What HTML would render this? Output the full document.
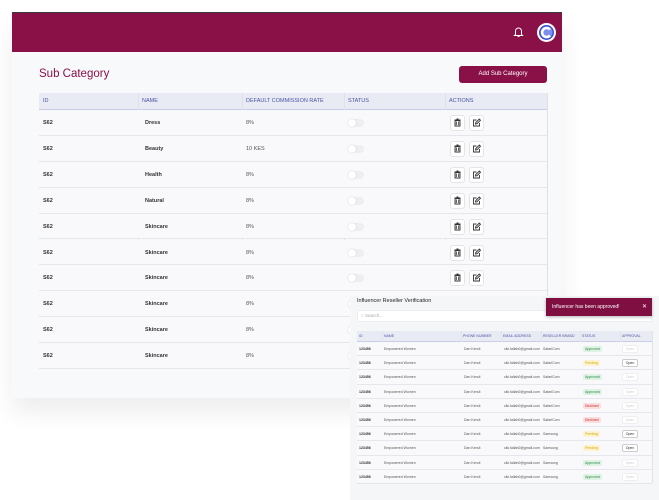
<!DOCTYPE html>
<html><head><meta charset="utf-8"><style>
*{margin:0;padding:0;box-sizing:border-box}
body{width:659px;height:500px;background:#fff;position:relative;overflow:hidden;font-family:"Liberation Sans",sans-serif}
.abs{position:absolute}
#card{left:12px;top:12px;width:550px;height:386px;background:#f8f9fb;box-shadow:0 14px 22px rgba(0,0,0,.07)}
#bar{left:12px;top:12px;width:550px;height:40px;background:#8a1048;border-top:1px solid #3a3a3a}
.t{position:absolute;white-space:nowrap}
.hd{background:#e8eaf4;color:#4a55a2;font-size:6px;border-bottom:1.5px solid #c9cde6}
.row{border-bottom:1px solid #e6e7ec;background:#f9f9fb}
.btn{position:absolute;width:15px;height:16px;border:1px solid #e4e4e8;border-radius:3px;background:#fff}
.tg{position:absolute;width:16px;height:8px;border-radius:4px;background:#eceef2}
.tg:before{content:"";position:absolute;left:0;top:0;width:8px;height:8px;border-radius:50%;background:#fff;box-shadow:0 0 1px rgba(0,0,0,.3)}
</style></head><body>
<div id="card" class="abs"></div>
<div id="bar" class="abs"></div>
<svg class="abs" style="left:513px;top:26px" width="11" height="12" viewBox="0 0 11 12"><path d="M2.5 8.5V5a3 3 0 0 1 6 0v3.5l1 1H1.5z" fill="none" stroke="#fff" stroke-width="1"/><path d="M4.5 10.5h2" stroke="#fff"/></svg>
<svg class="abs" style="left:537px;top:23px" width="19" height="19" viewBox="0 0 19 19"><circle cx="9.5" cy="9.5" r="9.5" fill="#fff"/><circle cx="9.5" cy="9.5" r="7.5" fill="#3b4fd6"/><circle cx="9.5" cy="9.5" r="6" fill="#7f8ff0"/><path d="M13 6.5a4.5 4.5 0 1 0 0 6" fill="none" stroke="#fff" stroke-width="2.5"/></svg>
<div class="t" style="left:39px;top:68px;font-size:11.5px;color:#8a1048">Sub Category</div>
<div class="abs" style="left:459px;top:66px;width:88px;height:17px;background:#8a1048;border-radius:3px;color:#fff;font-size:6px;text-align:center;line-height:17px">Add Sub Category</div>
<div class="abs hd" style="left:39px;top:93px;width:508px;height:17px"></div>
<div id="rows"></div>
<div class="abs" style="left:350px;top:296px;width:309px;height:204px;background:#f5f6f8"></div>
<div class="t" style="left:357px;top:298px;font-size:5.5px;color:#222">Influencer Reseller Verification</div>
<div class="abs" style="left:357px;top:310px;width:295px;height:12px;background:#fff;border:1px solid #eee"></div>
<div class="t" style="left:361px;top:313px;font-size:4.5px;color:#aaa">○ Search...</div>
<div class="abs hd" style="left:357px;top:331px;width:295px;height:11px"></div>
<div id="rows2"></div>
<div class="abs" style="left:546px;top:298px;width:106px;height:18px;background:#7f0e41;box-shadow:0 1px 3px rgba(0,0,0,.3)"></div>
<div class="t" style="left:552px;top:304px;font-size:5px;color:#fff">Influencer has been approved!</div>
<div class="t" style="left:642px;top:303px;font-size:6px;color:#fff">✕</div>
<script>
var names=["Dress","Beauty","Health","Natural","Skincare","Skincare","Skincare","Skincare","Skincare","Skincare"];
var cols=[39,138,242,344,445,547];
var h='';
var hdr=["ID","NAME","DEFAULT COMMISSION RATE","STATUS","ACTIONS"];
for(var i=0;i<5;i++){h+='<div class="t" style="left:'+(cols[i]+4)+'px;top:98px;font-size:5.5px;color:#4a55a2">'+hdr[i]+'</div>';
h+='<div class="abs" style="left:'+cols[i+1]+'px;top:93px;width:1px;height:276px;background:#dfe1ea"></div>';}
for(var r=0;r<10;r++){var y=110+r*25.9;
h+='<div class="abs row" style="left:39px;top:'+y+'px;width:508px;height:25.9px"></div>';
var cy=y+10;
h+='<div class="t" style="left:43px;top:'+cy+'px;font-size:5.5px;font-weight:bold;color:#333">S62</div>';
h+='<div class="t" style="left:145px;top:'+cy+'px;font-size:5.5px;font-weight:bold;color:#333">'+names[r]+'</div>';
h+='<div class="t" style="left:246px;top:'+cy+'px;font-size:5.5px;color:#555">'+(r==1?'10 KES':'8%')+'</div>';
h+='<div class="tg" style="left:348px;top:'+(y+9)+'px"></div>';
h+='<div class="btn" style="left:450px;top:'+(y+5)+'px"><svg width="13" height="14" viewBox="0 0 13 14"><path d="M4 4.5h5v5.5h-5zM3.5 4h6M5.5 3h2M5.3 5.5v3.5M7.7 5.5v3.5" fill="none" stroke="#333" stroke-width=".9"/></svg></div>';
h+='<div class="btn" style="left:469px;top:'+(y+5)+'px"><svg width="13" height="14" viewBox="0 0 13 14"><path d="M6.5 4h-3v6h6v-3M5.5 8l.3-1.5 3.5-3.5 1.2 1.2-3.5 3.5z" fill="none" stroke="#333" stroke-width=".9"/></svg></div>';}
document.getElementById('rows').innerHTML=h;
var c2=[357,382,461,501,541,580,620,652];
var hd2=["ID","NAME","PHONE NUMBER","EMAIL ADDRESS","RESELLER BRAND","STATUS","APPROVAL"];
var st=["A","P","A","A","D","D","P","P","A","A"];
var br=["SafariCom","SafariCom","SafariCom","SafariCom","SafariCom","SafariCom","Samsung","Samsung","Samsung","Samsung"];
h='';
for(var i=0;i<7;i++){h+='<div class="t" style="left:'+(c2[i]+2)+'px;top:334px;font-size:3.5px;color:#4a55a2">'+hd2[i]+'</div>';
h+='<div class="abs" style="left:'+c2[i+1]+'px;top:331px;width:1px;height:152px;background:#e2e3ea"></div>';}
for(var r=0;r<10;r++){var y=342+r*14.2;
h+='<div class="abs row" style="left:357px;top:'+y+'px;width:295px;height:14.2px"></div>';
var ty=y+5;
h+='<div class="t" style="left:359px;top:'+ty+'px;font-size:3.5px;font-weight:bold;color:#333">123456</div>';
h+='<div class="t" style="left:384px;top:'+ty+'px;font-size:3.5px;color:#555">Empowered Women</div>';
h+='<div class="t" style="left:464px;top:'+ty+'px;font-size:3.5px;color:#555">Dan Kendi</div>';
h+='<div class="t" style="left:504px;top:'+ty+'px;font-size:3.5px;color:#555">ciki.fallah0@gmail.com</div>';
h+='<div class="t" style="left:543px;top:'+ty+'px;font-size:3.5px;color:#555">'+br[r]+'</div>';
var s=st[r],bg=s=="A"?"#dff3e4":s=="P"?"#fdf3d0":"#fbdede",fc=s=="A"?"#2a8a45":s=="P"?"#d4a90c":"#c92a2a",tx=s=="A"?"Approved":s=="P"?"Pending":"Declined";
h+='<div class="t" style="left:583px;top:'+(y+4)+'px;font-size:3.5px;padding:1px 2px;background:'+bg+';color:'+fc+';border-radius:2px">'+tx+'</div>';
h+='<div class="abs" style="left:622px;top:'+(y+3)+'px;width:16px;height:8px;background:#fff;border:1px solid '+(s=="P"?"#ccc":"#eee")+';border-radius:2px;font-size:3.5px;color:'+(s=="P"?"#333":"#ccc")+';text-align:center;line-height:6px">Open</div>';}
document.getElementById('rows2').innerHTML=h;
</script>
</body></html>
